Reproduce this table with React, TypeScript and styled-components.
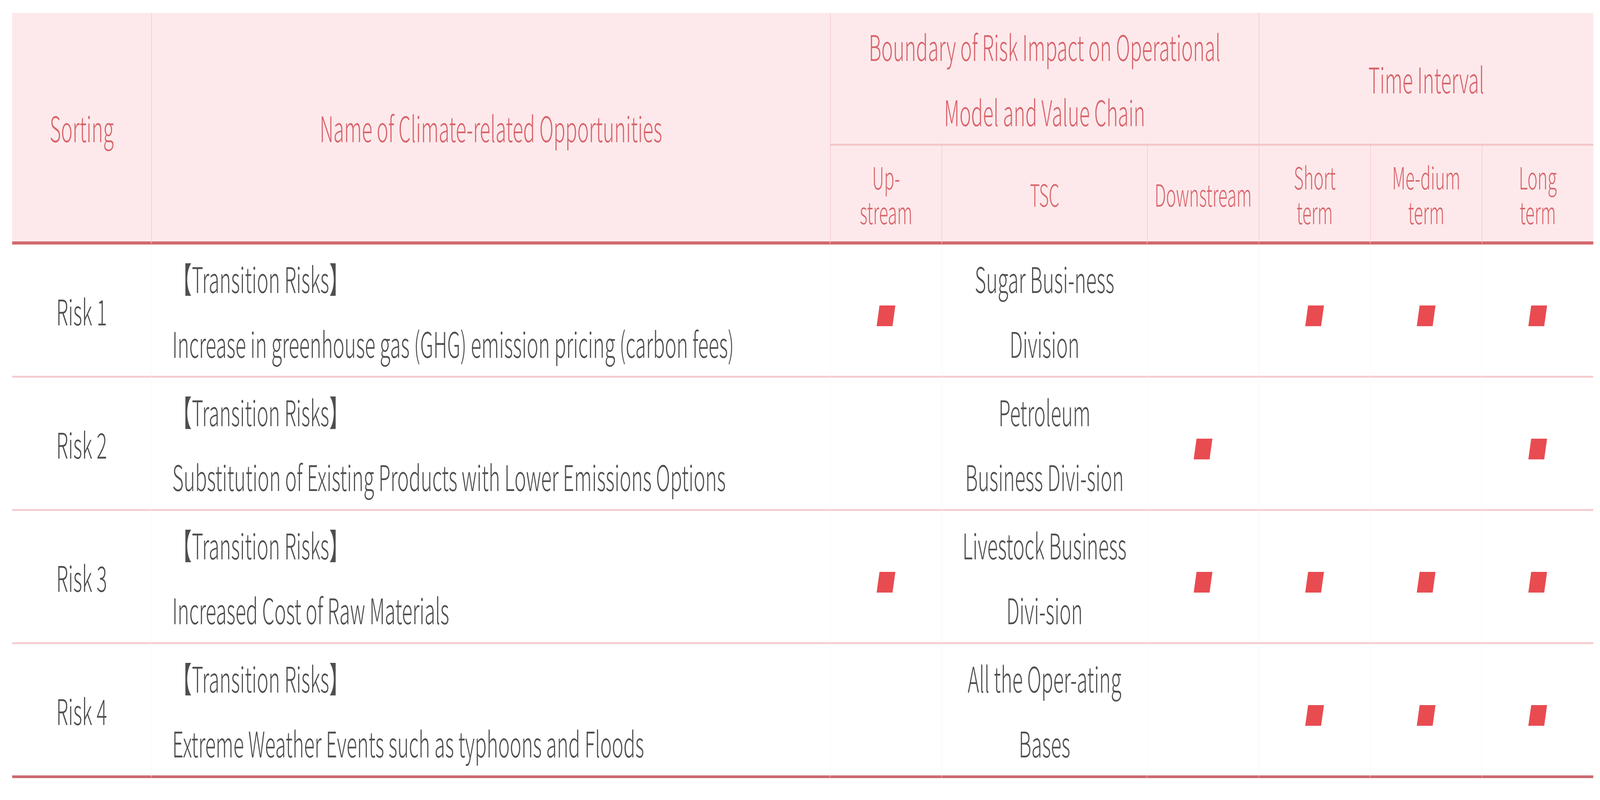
import React, { useEffect, useState } from 'react';
import styled, { createGlobalStyle } from 'styled-components';

// the layout is drawn for a 7358x2048 frame; Stage fits it to the real window
const FRAME_W = 7358;
const FRAME_H = 2048;

const GlobalStyle = createGlobalStyle`
  html, body {
    margin: 0;
    padding: 0;
    background: #ffffff;
    overflow: hidden;
  }
`;

const Stage = styled.div`
  width: ${FRAME_W}px;
  height: ${FRAME_H}px;
  transform-origin: 0 0;
  background: #ffffff;
`;

const Page = styled.div`
  padding: 33px 0 0 56px;
`;

const Table = styled.table`
  width: 7271px;
  table-layout: fixed;
  border-collapse: separate;
  border-spacing: 0;
  font-family: "Noto Sans CJK TC", "Noto Sans", sans-serif;
  font-weight: 300;
`;

const HeadCell = styled.th<{ $first?: boolean; $group?: boolean }>`
  background: #fde9eb;
  color: #d8646b;
  font-weight: 300;
  font-size: 90px;
  line-height: 167px;
  text-align: center;
  vertical-align: middle;
  padding: 0;
  height: ${p => (p.$group ? '335px' : 'auto')};
  border-left: ${p => (p.$first ? 'none' : '3px solid #f4cbce')};
  border-bottom: ${p => (p.$group ? '5px solid #f3c6c9' : '8px solid #d4686d')};
  white-space: nowrap;
`;

const SubCell = styled.th`
  background: #fde9eb;
  color: #d8646b;
  font-weight: 300;
  font-size: 78px;
  line-height: 89px;
  text-align: center;
  vertical-align: middle;
  padding: 0;
  height: 245px;
  border-left: 3px solid #f4cbce;
  border-bottom: 8px solid #d4686d;
  white-space: nowrap;
`;

const Row = styled.tr<{ $last?: boolean }>`
  & > td {
    border-bottom: ${p => (p.$last ? '7px solid #cc6a6f' : '5px solid #f6cdd0')};
  }
`;

const Cell = styled.td<{ $align?: 'left' | 'center'; $first?: boolean }>`
  height: 336px;
  padding: ${p => (p.$align === 'left' ? '0 0 0 95px' : '0')};
  text-align: ${p => p.$align ?? 'center'};
  vertical-align: middle;
  color: #4f4f4f;
  font-size: 90px;
  line-height: 166px;
  border-left: ${p => (p.$first ? 'none' : '2px solid #fbf4f4')};
  white-space: nowrap;
`;

const Mark = styled.span`
  display: inline-block;
  width: 73px;
  height: 53px;
  background: #e84c51;
  transform: skewX(-14deg);
  vertical-align: middle;
`;

type RiskRow = {
  id: string;
  title: string;
  tsc: string[];
  marks: boolean[]; // upstream, downstream, short, medium, long
};

const rows: RiskRow[] = [
  {
    id: 'Risk 1',
    title: 'Increase in greenhouse gas (GHG) emission pricing (carbon fees)',
    tsc: ['Sugar Busi-ness', 'Division'],
    marks: [true, false, true, true, true],
  },
  {
    id: 'Risk 2',
    title: 'Substitution of Existing Products with Lower Emissions Options',
    tsc: ['Petroleum', 'Business Divi-sion'],
    marks: [false, true, false, false, true],
  },
  {
    id: 'Risk 3',
    title: 'Increased Cost of Raw Materials',
    tsc: ['Livestock Business', 'Divi-sion'],
    marks: [true, true, true, true, true],
  },
  {
    id: 'Risk 4',
    title: 'Extreme Weather Events such as typhoons and Floods',
    tsc: ['All the Oper-ating', 'Bases'],
    marks: [false, false, true, true, true],
  },
];

const Lines: React.FC<{ lines: string[] }> = ({ lines }) => (
  <>
    {lines.map((l, i) => (
      <React.Fragment key={i}>
        {i > 0 && <br />}
        {l}
      </React.Fragment>
    ))}
  </>
);

const getScale = () => ({
  x: window.innerWidth / FRAME_W,
  y: window.innerHeight / FRAME_H,
});

const App: React.FC = () => {
  const [scale, setScale] = useState(getScale);

  useEffect(() => {
    const onResize = () => setScale(getScale());
    window.addEventListener('resize', onResize);
    return () => window.removeEventListener('resize', onResize);
  }, []);

  return (
    <Stage style={{ transform: `scale(${scale.x}, ${scale.y})` }}>
      <GlobalStyle />
      <Page>
        <Table>
          <colgroup>
            <col style={{ width: 639 }} />
            <col style={{ width: 3122 }} />
            <col style={{ width: 513 }} />
            <col style={{ width: 945 }} />
            <col style={{ width: 513 }} />
            <col style={{ width: 513 }} />
            <col style={{ width: 513 }} />
            <col style={{ width: 513 }} />
          </colgroup>
          <thead>
            <tr>
              <HeadCell rowSpan={2} $first>Sorting</HeadCell>
              <HeadCell rowSpan={2}>Name of Climate-related Opportunities</HeadCell>
              <HeadCell colSpan={3} $group>
                <Lines lines={['Boundary of Risk Impact on Operational', 'Model and Value Chain']} />
              </HeadCell>
              <HeadCell colSpan={3} $group>Time Interval</HeadCell>
            </tr>
            <tr>
              <SubCell><Lines lines={['Up-', 'stream']} /></SubCell>
              <SubCell>TSC</SubCell>
              <SubCell>Downstream</SubCell>
              <SubCell><Lines lines={['Short', 'term']} /></SubCell>
              <SubCell><Lines lines={['Me-dium', 'term']} /></SubCell>
              <SubCell><Lines lines={['Long', 'term']} /></SubCell>
            </tr>
          </thead>
          <tbody>
            {rows.map((r, i) => (
              <Row key={r.id} $last={i === rows.length - 1}>
                <Cell $first>{r.id}</Cell>
                <Cell $align="left">
                  <Lines lines={['【Transition Risks】', r.title]} />
                </Cell>
                <Cell>{r.marks[0] && <Mark />}</Cell>
                <Cell><Lines lines={r.tsc} /></Cell>
                <Cell>{r.marks[1] && <Mark />}</Cell>
                <Cell>{r.marks[2] && <Mark />}</Cell>
                <Cell>{r.marks[3] && <Mark />}</Cell>
                <Cell>{r.marks[4] && <Mark />}</Cell>
              </Row>
            ))}
          </tbody>
        </Table>
      </Page>
    </Stage>
  );
};

export default App;
